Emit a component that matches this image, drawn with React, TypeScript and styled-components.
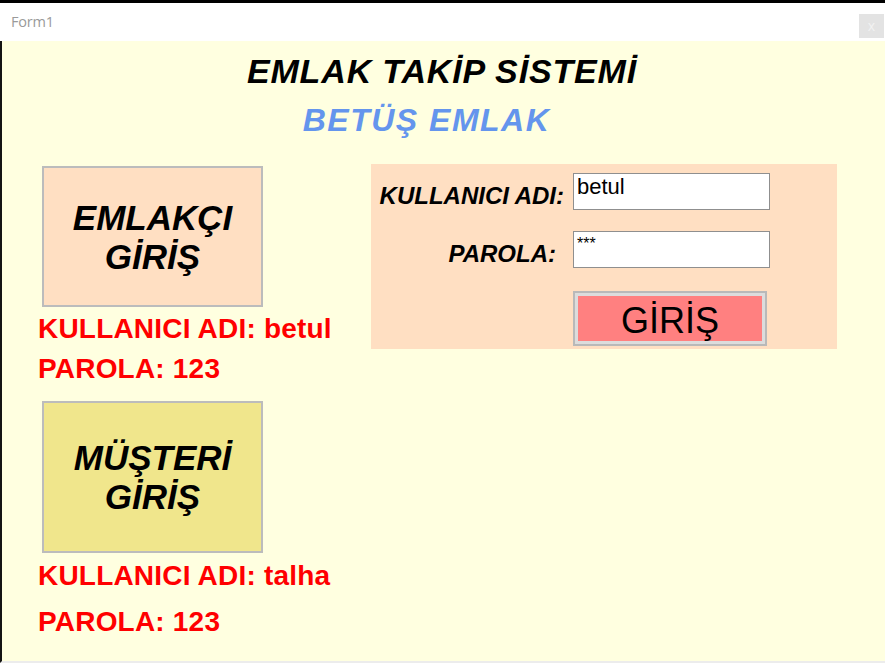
import React from "react";
import styled, { createGlobalStyle } from "styled-components";

const Global = createGlobalStyle`
  html, body { margin: 0; padding: 0; background: #000; }
  body { width: 885px; height: 663px; overflow: hidden; }
  * { box-sizing: border-box; }
`;

const Window = styled.div`
  width: 885px;
  height: 663px;
  display: flex;
  flex-direction: column;
  border-top: 3px solid #000;
  background: #fff;
`;

const TitleBar = styled.div`
  height: 38px;
  display: flex;
  align-items: center;
  justify-content: space-between;
  padding-left: 11px;
  padding-right: 1px;
  background: #fff;
`;

const TitleText = styled.span`
  font-family: "Open Sans", "Noto Sans", sans-serif;
  font-size: 14.5px;
  color: #9a9a9a;
  margin-top: -1px;
  letter-spacing: -0.2px;
`;

const CloseBtn = styled.div`
  width: 25px;
  height: 24px;
  margin-top: 7px;
  background: #e3e3e3;
  color: #f2f2f2;
  display: flex;
  align-items: center;
  justify-content: center;
  font-family: "Open Sans", sans-serif;
  font-size: 14px;
  line-height: 1;
`;

const Content = styled.div`
  flex: 1;
  display: flex;
  flex-direction: column;
  background: #ffffe0;
  border-left: 2px solid #141414;
  border-bottom: 2px solid #ececec;
`;

const Header = styled.div`
  display: flex;
  flex-direction: column;
  align-items: center;
  margin-top: 10px;
`;

const Title = styled.h1`
  margin: 0 3px 0 0;
  font-family: "Liberation Sans", Arial, sans-serif;
  font-weight: bold;
  font-style: italic;
  font-size: 34px;
  line-height: 40px;
  color: #000;
  letter-spacing: 0.85px;
`;

const Subtitle = styled.h2`
  margin: 9px 34px 0 0;
  font-family: "Liberation Sans", Arial, sans-serif;
  font-weight: bold;
  font-style: italic;
  font-size: 32px;
  line-height: 40px;
  color: #6495ed;
  letter-spacing: 1.5px;
`;

const Main = styled.div`
  display: flex;
  align-items: flex-start;
  margin-top: 24px;
`;

const LeftCol = styled.div`
  display: flex;
  flex-direction: column;
  width: 369px;
  padding-left: 36px;
  margin-top: 2px;
`;

const LoginTile = styled.button<{ $bg: string; $h: number; $mt?: number }>`
  width: 221px;
  height: ${(p) => p.$h}px;
  margin: ${(p) => p.$mt ?? 0}px 0 0 4px;
  background: ${(p) => p.$bg};
  border: 2px solid #bcbcbc;
  font-family: "Liberation Sans", Arial, sans-serif;
  font-weight: bold;
  font-style: italic;
  font-size: 35px;
  line-height: 39px;
  color: #000;
  display: flex;
  align-items: center;
  justify-content: center;
  text-align: center;
  padding: 0;
  cursor: pointer;
`;

const InfoLine = styled.div<{ $mt?: number }>`
  margin-top: ${(p) => p.$mt ?? 0}px;
  font-family: "Liberation Sans", Arial, sans-serif;
  font-weight: bold;
  font-size: 28px;
  line-height: 40px;
  color: #ff0000;
  white-space: nowrap;
  letter-spacing: 0.2px;
`;

const Panel = styled.div`
  width: 466px;
  background: #ffdfc2;
  padding: 9px 0 5px 9px;
  display: grid;
  grid-template-columns: 184px 197px;
  grid-template-rows: 37px 37px 55px;
  column-gap: 9px;
  row-gap: 21px;
  align-items: center;
`;

const FieldLabel = styled.label<{ $pr?: number }>`
  justify-self: end;
  padding-right: ${(p) => p.$pr ?? 0}px;
  margin-top: 8px;
  font-family: "Liberation Sans", Arial, sans-serif;
  font-weight: bold;
  font-style: italic;
  font-size: 24px;
  color: #000;
  white-space: nowrap;
`;

const TextBox = styled.div`
  width: 197px;
  height: 37px;
  background: #fff;
  border: 1px solid #8f8f8f;
  padding: 1px 0 0 3px;
  font-family: "Liberation Sans", Arial, sans-serif;
  font-size: 22px;
  line-height: 24px;
  color: #000;
`;

const StarText = styled.span`
  font-size: 16px;
  position: relative;
  top: -3px;
`;

const SubmitBtn = styled.button`
  grid-column: 2;
  margin-top: 4px;
  width: 194px;
  height: 55px;
  background: #ff8080;
  border: 2px solid #b9b9b9;
  box-shadow: inset 0 0 0 3px #dcdcdc;
  font-family: "Liberation Sans", Arial, sans-serif;
  font-size: 36px;
  color: #000;
  padding: 4px 0 0 0;
  display: flex;
  align-items: center;
  justify-content: center;
  cursor: pointer;
`;

export default function App() {
  return (
    <>
      <Global />
      <Window>
        <TitleBar>
          <TitleText>Form1</TitleText>
          <CloseBtn>x</CloseBtn>
        </TitleBar>
        <Content>
          <Header>
            <Title>EMLAK TAKİP SİSTEMİ</Title>
            <Subtitle>BETÜŞ EMLAK</Subtitle>
          </Header>
          <Main>
            <LeftCol>
              <LoginTile $bg="#ffdfc2" $h={141}>
                EMLAKÇI
                <br />
                GİRİŞ
              </LoginTile>
              <InfoLine $mt={2}>KULLANICI ADI: betul</InfoLine>
              <InfoLine>PAROLA: 123</InfoLine>
              <LoginTile $bg="#f0e68c" $h={152} $mt={12}>
                MÜŞTERİ
                <br />
                GİRİŞ
              </LoginTile>
              <InfoLine $mt={3}>KULLANICI ADI: talha</InfoLine>
              <InfoLine $mt={6}>PAROLA: 123</InfoLine>
            </LeftCol>
            <Panel>
              <FieldLabel>KULLANICI ADI:</FieldLabel>
              <TextBox>betul</TextBox>
              <FieldLabel $pr={8}>PAROLA:</FieldLabel>
              <TextBox>
                <StarText>***</StarText>
              </TextBox>
              <SubmitBtn>GİRİŞ</SubmitBtn>
            </Panel>
          </Main>
        </Content>
      </Window>
    </>
  );
}
